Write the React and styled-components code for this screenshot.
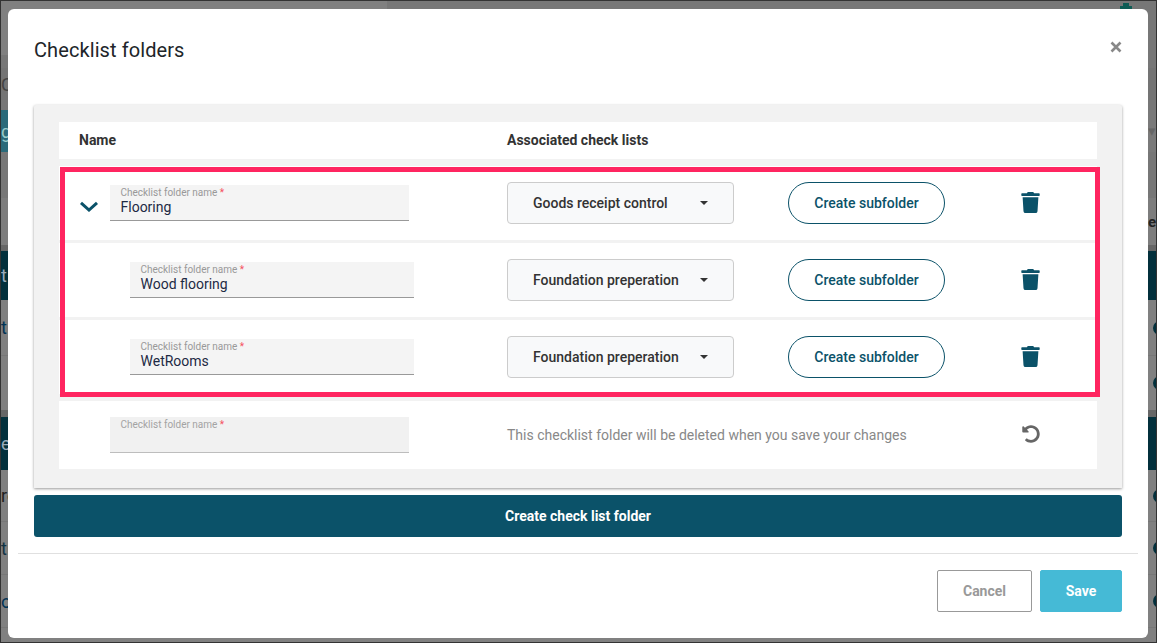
import styled, { createGlobalStyle } from "styled-components";
import { FaTrash, FaUndoAlt } from "react-icons/fa";

const GlobalStyle = createGlobalStyle`
  html, body {
    margin: 0;
    padding: 0;
    height: 100%;
    overflow: hidden;
    font-family: Roboto, "Liberation Sans", sans-serif;
  }
`;

const Page = styled.div`
  box-sizing: border-box;
  width: 1157px;
  height: 643px;
  border: 1px solid #333;
  background: #808080;
  overflow: hidden;
  font-size: 18px;
  color: #222;
  position: relative;
`;

const BackRow = styled.div`
  height: ${(p) => p.$h}px;
  background: ${(p) => p.$bg || "#808080"};
  border-bottom: ${(p) => (p.$line ? "1px solid #777" : "none")};
  box-sizing: border-box;
  color: ${(p) => p.$color || "#222"};
  display: flex;
  justify-content: space-between;
  align-items: stretch;
  white-space: nowrap;
`;

const BackLeft = styled.div`
  width: 300px;
  display: flex;
  align-items: center;
  background: ${(p) => p.$bg || "transparent"};
  color: ${(p) => p.$color || "inherit"};
`;

const BackRight = styled.div`
  display: flex;
  align-items: ${(p) => p.$align || "center"};
  font-size: 15px;
  font-weight: ${(p) => p.$weight || 400};
  color: ${(p) => p.$color || "inherit"};
`;

const BackDot = styled.span`
  width: 14px;
  height: 14px;
  border-radius: 50%;
  background: #03303c;
  margin-right: -11px;
`;

const BackIcon = styled.svg`
  width: 12px;
  height: 8px;
  margin: 2px 24px 0 0;
`;

const Modal = styled.div`
  position: absolute;
  left: 7px;
  top: 8px;
  width: 1140px;
  height: 629px;
  background: #fff;
  border-radius: 6px;
`;

const ModalHeader = styled.header`
  height: 96px;
  padding: 0 24px 0 26px;
  box-sizing: border-box;
  display: flex;
  justify-content: space-between;
  align-items: flex-start;
`;

const Title = styled.h1`
  margin: 28px 0 0;
  font-size: 20px;
  line-height: 26px;
  font-weight: 400;
  letter-spacing: 0.09px;
  color: #212529;
`;

const CloseButton = styled.button`
  margin: 24px 0 0;
  padding: 0;
  border: 0;
  background: none;
  width: 14px;
  height: 28px;
  display: flex;
  align-items: center;
  color: #888;
  svg {
    width: 12px;
    height: 12px;
  }
`;

const Body = styled.div`
  padding: 0 26px;
`;

const Panel = styled.section`
  position: relative;
  background: #f2f2f2;
  padding: 17px 25px 19px;
  height: 383px;
  box-sizing: border-box;
  border-radius: 2px 2px 0 0;
  box-shadow: 0 1px 3px rgba(0, 0, 0, 0.4);
`;

const HeadRow = styled.div`
  height: 37px;
  padding-bottom: 2px;
  box-sizing: border-box;
  background: #fff;
  display: grid;
  grid-template-columns: 448px 1fr;
  align-items: center;
  margin-bottom: 7px;
  font-size: 14px;
  font-weight: 700;
  color: #333;
`;

const HeadCell = styled.div`
  padding-left: ${(p) => p.$pad || 0}px;
`;

const Group = styled.div`
  display: flex;
  flex-direction: column;
  gap: 3px;
  margin-bottom: 7px;
`;

const Row = styled.div`
  height: ${(p) => p.$h || 74}px;
  background: #fff;
  display: grid;
  grid-template-columns: 448px 281px 232px 1fr;
  align-items: center;
`;

const NameCell = styled.div`
  display: flex;
  align-items: center;
  gap: 12px;
  padding-left: ${(p) => p.$pad}px;
`;

const Chevron = styled.svg`
  width: 20px;
  height: 11px;
  margin: 6px -1px 0 -1px;
  flex: none;
`;

const Field = styled.label`
  display: block;
  box-sizing: border-box;
  width: ${(p) => p.$w}px;
  height: 36px;
  padding: 2px 10.5px 0;
  background: ${(p) => (p.$off ? "#f1f1f1" : "#f4f4f4")};
  border-bottom: 1px solid ${(p) => (p.$off ? "#bdbdbd" : "#999")};
`;

const FieldLabel = styled.span`
  display: block;
  font-size: 10px;
  line-height: 11px;
  color: ${(p) => (p.$off ? "#a3a3a3" : "#999")};
  i {
    color: #f4505f;
    font-style: normal;
  }
`;

const FieldValue = styled.span`
  display: block;
  font-size: 14px;
  line-height: 18px;
  color: #1d2a44;
`;

const Select = styled.button`
  width: 227px;
  height: 42px;
  box-sizing: border-box;
  padding: 0 25px;
  display: flex;
  align-items: center;
  justify-content: space-between;
  background: #f8f9fa;
  border: 1px solid #ccc;
  border-radius: 4px;
  font: 500 14px Roboto, "Liberation Sans", sans-serif;
  color: #333;
  &::after {
    content: "";
    border-top: 4px solid #333;
    border-left: 4px solid transparent;
    border-right: 4px solid transparent;
  }
`;

const OutlineButton = styled.button`
  width: 157px;
  height: 42px;
  border: 1px solid #0b5269;
  border-radius: 21px;
  background: #fff;
  color: #0b5269;
  font: 500 14px Roboto, "Liberation Sans", sans-serif;
`;

const IconCell = styled.div`
  display: flex;
  padding-bottom: 2px;
  padding-left: ${(p) => p.$pl || 0}px;
  color: ${(p) => p.$color};
  font-size: ${(p) => p.$size || 21}px;
`;

const Message = styled.div`
  grid-column: span 2;
  font-size: 14px;
  color: #888;
`;

const Highlight = styled.div`
  position: absolute;
  left: 26px;
  top: 62px;
  width: 1040px;
  height: 230px;
  box-sizing: border-box;
  border: 5px solid #ff2560;
  pointer-events: none;
`;

const PrimaryButton = styled.button`
  display: block;
  width: 100%;
  height: 42px;
  margin-top: 7px;
  border: 0;
  border-radius: 3px;
  background: #0b5269;
  color: #fff;
  font: 700 14px Roboto, "Liberation Sans", sans-serif;
`;

const Divider = styled.hr`
  margin: 16px 10px 0;
  border: 0;
  border-top: 1px solid #e0e0e0;
`;

const Footer = styled.footer`
  display: flex;
  justify-content: flex-end;
  gap: 8px;
  padding: 16px 26px 0;
`;

const FooterButton = styled.button`
  height: 42px;
  width: ${(p) => p.$w}px;
  border-radius: 2px;
  box-sizing: border-box;
  border: 1px solid ${(p) => (p.$save ? "#45bad6" : "#999")};
  background: ${(p) => (p.$save ? "#45bad6" : "#fff")};
  color: ${(p) => (p.$save ? "#fff" : "#999")};
  font: 700 14px Roboto, "Liberation Sans", sans-serif;
`;

const backRows = [
  { h: 54, bg: "linear-gradient(to right, #808080 386px, #777 386px)", icon: true },
  { h: 13, bg: "#777" },
  { h: 32, bg: "#747474", left: "Cl", color: "#444" },
  { h: 10, bg: "#777" },
  { h: 42, bg: "#7a7a7a", left: "g", leftBg: "#2a6a7a", leftColor: "#9cc", right: "s ▾", rightColor: "#666" },
  { h: 46, bg: "#777" },
  { h: 47, bg: "#7d7d7d", right: "ue", rightWeight: 700 },
  { h: 6, bg: "#666" },
  { h: 49, bg: "#03303c", left: "t", color: "#9ab" },
  { h: 56, line: true, left: "t", color: "#035", dot: true },
  { h: 54, dot: true },
  { h: 7, bg: "#666" },
  { h: 53, bg: "#03303c", left: "e", color: "#9ab" },
  { h: 52, line: true, left: "re", dot: true },
  { h: 53, line: true, left: "tr", color: "#134", dot: true },
  { h: 53, line: true, left: "ol", color: "#035", dot: true },
];

const rows = [
  { name: "Wood flooring", list: "Foundation preperation" },
  { name: "WetRooms", list: "Foundation preperation" },
];

function NameField({ w, value }) {
  return (
    <Field $w={w}>
      <FieldLabel>
        Checklist folder name <i>*</i>
      </FieldLabel>
      <FieldValue>{value}</FieldValue>
    </Field>
  );
}

function App() {
  return (
    <Page>
      <GlobalStyle />
      {backRows.map((r, i) => (
        <BackRow key={i} $h={r.h} $bg={r.bg} $line={r.line} $color={r.color}>
          <BackLeft $bg={r.leftBg} $color={r.leftColor}>{r.left}</BackLeft>
          <BackRight $weight={r.rightWeight} $color={r.rightColor} $align={r.icon ? "flex-start" : "center"}>
            {r.right}
            {r.dot && <BackDot />}
            {r.icon && (
              <BackIcon viewBox="0 0 12 8">
                <path d="M3 0h6v3h3v5H0V3h3z" fill="#0f5c55" />
              </BackIcon>
            )}
          </BackRight>
        </BackRow>
      ))}
      <Modal>
        <ModalHeader>
          <Title>Checklist folders</Title>
          <CloseButton aria-label="Close">
            <svg viewBox="0 0 12 12">
              <path d="M1.5 1.5l9 9M10.5 1.5l-9 9" stroke="currentColor" strokeWidth="2.6" fill="none" />
            </svg>
          </CloseButton>
        </ModalHeader>
        <Body>
          <Panel>
            <HeadRow>
              <HeadCell $pad={20}>Name</HeadCell>
              <HeadCell>Associated check lists</HeadCell>
            </HeadRow>
            <Group>
              <Row>
                <NameCell $pad={21}>
                  <Chevron viewBox="0 0 20 11">
                    <path d="M2 1.8L10 9l8-7.2" stroke="#0b5269" strokeWidth="3" fill="none" />
                  </Chevron>
                  <NameField w={299} value="Flooring" />
                </NameCell>
                <Select>Goods receipt control</Select>
                <OutlineButton>Create subfolder</OutlineButton>
                <IconCell $color="#0b5269"><FaTrash /></IconCell>
              </Row>
              {rows.map((r) => (
                <Row key={r.name}>
                  <NameCell $pad={71}>
                    <NameField w={284} value={r.name} />
                  </NameCell>
                  <Select>{r.list}</Select>
                  <OutlineButton>Create subfolder</OutlineButton>
                  <IconCell $color="#0b5269"><FaTrash /></IconCell>
                </Row>
              ))}
            </Group>
            <Row $h={68}>
              <NameCell $pad={51}>
                <Field $w={299} $off>
                  <FieldLabel $off>
                    Checklist folder name <i>*</i>
                  </FieldLabel>
                </Field>
              </NameCell>
              <Message>This checklist folder will be deleted when you save your changes</Message>
              <IconCell $color="#666" $size={18} $pl={2}><FaUndoAlt /></IconCell>
            </Row>
            <Highlight />
          </Panel>
          <PrimaryButton>Create check list folder</PrimaryButton>
        </Body>
        <Divider />
        <Footer>
          <FooterButton $w={95}>Cancel</FooterButton>
          <FooterButton $w={82} $save>Save</FooterButton>
        </Footer>
      </Modal>
    </Page>
  );
}

export default App;
